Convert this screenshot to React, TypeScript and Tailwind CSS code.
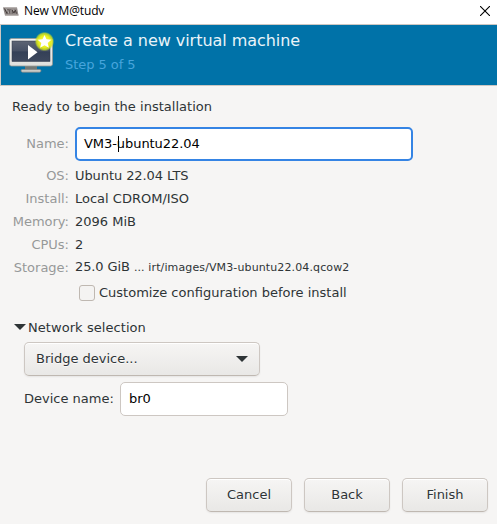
import React from 'react';

const BUTTON =
  'box-border rounded-[5px] border border-[#cdc7c2] border-b-[#bfb8b1] bg-linear-to-b from-[#f6f5f4] to-[#e9e8e6] shadow-[inset_0_1px_#ffffff,0_1px_2px_rgba(0,0,0,0.07)] [text-shadow:0_1px_rgba(255,255,255,0.77)]';

function AppLogo() {
  return (
    <svg width="16" height="9" viewBox="0 0 16 9" className="-mt-px block">
      <path d="M0 .5h14L15.500 8.500H2z" fill="#8d8684" />
      <path d="M0 .5h14v1H.3zM2 7.500h13.500v1H2z" fill="#a9a3a1" />
      <path d="M1.500 1.500l2.500 5L5 2M7 6.500V2.500M9 6.500V3l2 3 1.200-3 1.300 3.500" fill="none" stroke="#453d3c" strokeWidth="1" />
      <path d="M3.500 2l2 4M8 3v3.500M10.200 2.500l1 1.500" fill="none" stroke="#cfcac8" strokeWidth=".7" />
    </svg>
  );
}

function MonitorIcon() {
  return (
    <svg width="48" height="48" viewBox="0 0 48 48" className="block">
      <defs>
        <linearGradient id="frame" x1="0" y1="0" x2="0" y2="1">
          <stop offset="0" stopColor="#f2f2f0" />
          <stop offset="1" stopColor="#dfe0dd" />
        </linearGradient>
        <linearGradient id="screen" x1="0" y1="0" x2="0" y2="1">
          <stop offset="0" stopColor="#5d6474" />
          <stop offset=".5" stopColor="#465064" />
          <stop offset=".52" stopColor="#344057" />
          <stop offset="1" stopColor="#3d485d" />
        </linearGradient>
        <radialGradient id="glow">
          <stop offset="0" stopColor="#fff76a" />
          <stop offset=".6" stopColor="#eaf01c" />
          <stop offset=".82" stopColor="#d5e51c" stopOpacity=".8" />
          <stop offset="1" stopColor="#b5d92a" stopOpacity="0" />
        </radialGradient>
      </defs>
      <path d="M17 35h12v4H17z" fill="#747875" />
      <path d="M14.500 38.500h17q1.500 0 1.500 1.300t-1.500 1.400h-17q-1.500-.1-1.500-1.400t1.500-1.300z" fill="#c9cac7" stroke="#80837f" strokeWidth=".7" />
      <rect x="1.500" y="7.500" width="43" height="27.500" rx="2" fill="url(#frame)" stroke="#959995" strokeWidth=".8" />
      <rect x="4" y="10" width="38" height="20.500" fill="url(#screen)" stroke="#30394a" strokeWidth=".5" />
      <path d="M20 14v14.500l9.500-7.250z" fill="#fff" />
      <circle cx="36.500" cy="10.500" r="9.800" fill="url(#glow)" />
      <path d="M36.500 3.900l2 4.400 4.900.5-3.700 3.200 1.200 4.800-4.400-2.500-4.400 2.500 1.200-4.800-3.700-3.200 4.900-.5z" fill="#fff" />
    </svg>
  );
}

function Triangle() {
  return (
    <svg width="12" height="6" viewBox="0 0 12 6" className="block">
      <path d="M0 0h12L6 6z" fill="#2e3436" />
    </svg>
  );
}

function Label({ children }: { children: React.ReactNode }) {
  return <span className="w-[69px] shrink-0 text-right text-[#969999]">{children}</span>;
}

function Detail({ label, children }: { label: string; children: React.ReactNode }) {
  return (
    <div className="flex h-[23px] items-center gap-1.5">
      <Label>{label}</Label>
      <span className="flex items-baseline">{children}</span>
    </div>
  );
}

export default function App() {
  return (
    <div className="flex h-[524px] w-[497px] flex-col overflow-hidden whitespace-nowrap bg-[#f6f5f4] font-['DejaVu_Sans',sans-serif] text-[13px] leading-[16px] text-[#2e3436]">
      <div className="flex h-6 shrink-0 items-center bg-white pl-[3px] pr-[7px] text-black">
        <AppLogo />
        <span className="-mt-0.5 ml-[5px] font-['Open_Sans',sans-serif] text-[12px] tracking-[-0.15px]">New VM@tudv</span>
        <svg width="10" height="10" viewBox="0 0 10 10" className="-mt-0.5 ml-auto block">
          <path d="M0 0l10 10M10 0L0 10" stroke="#000" strokeWidth="1.100" />
        </svg>
      </div>

      <header className="flex h-[62px] shrink-0 border-y border-l border-[#cdc7c2] bg-[#0072a8] pl-[7px]">
        <div className="pt-[6px]"><MonitorIcon /></div>
        <div className="ml-[9px] pt-1.5">
          <h1 className="text-[16px] leading-[20px] tracking-[-0.04px] text-[#eaf4f9]">Create a new virtual machine</h1>
          <p className="mt-1.5 leading-[16px] tracking-[-0.05px] text-[#47a5dc]">Step 5 of 5</p>
        </div>
      </header>

      <main className="flex grow flex-col">
        <p className="ml-3 mt-[13px] tracking-[0.02px]">Ready to begin the installation</p>

        <div className="mt-3 flex h-[34px] items-center gap-1.5">
          <Label>Name:</Label>
          <div className="flex h-[34px] w-[338px] items-center rounded-[5px] border-2 border-[#3584e4] bg-white pl-[7px] tracking-[-0.06px] text-black">
            VM3-<span className="-mr-px h-4 w-px translate-x-px bg-black" />ubuntu22.04
          </div>
        </div>

        <div className="mt-[3px]">
          <Detail label="OS:"><span className="tracking-[-0.08px]">Ubuntu 22.04 LTS</span></Detail>
          <Detail label="Install:">Local CDROM/ISO</Detail>
          <Detail label="Memory:">2096 MiB</Detail>
          <Detail label="CPUs:">2</Detail>
          <Detail label="Storage:">
            <span className="tracking-[-0.1px]">25.0 GiB</span>
            <span className="ml-1 text-[11px] tracking-[0.12px]">... irt/images/VM3-ubuntu22.04.qcow2</span>
          </Detail>
        </div>

        <label className="ml-[79px] mt-[6px] flex h-4 items-center gap-1">
          <span className="size-4 rounded-[3px] border border-[#bfb8b1] bg-[#f4f3f2]" />
          Customize configuration before install
        </label>

        <section className="mt-[18px]">
          <div className="ml-3.5 flex h-4 items-center gap-0.5">
            <Triangle />
            <span className="pt-0.5 tracking-[0.06px]">Network selection</span>
          </div>
          <div className={`${BUTTON} ml-6 mt-[7px] flex h-[34px] w-[236px] items-center justify-between pl-[11px] pr-[11px]`}>
            Bridge device...
            <Triangle />
          </div>
          <div className="ml-6 mt-1.5 flex h-[34px] items-center">
            <span className="w-24">Device name:</span>
            <div className="flex h-[34px] w-[168px] items-center rounded-[5px] border border-[#cdc7c2] bg-white pl-2 text-black">br0</div>
          </div>
        </section>

        <footer className="mb-3 mr-[9px] mt-auto flex justify-end gap-3">
          <button className={`${BUTTON} h-[34px] w-[86px]`}>Cancel</button>
          <button className={`${BUTTON} h-[34px] w-[86px]`}>Back</button>
          <button className={`${BUTTON} h-[34px] w-[86px]`}>Finish</button>
        </footer>
      </main>
    </div>
  );
}
